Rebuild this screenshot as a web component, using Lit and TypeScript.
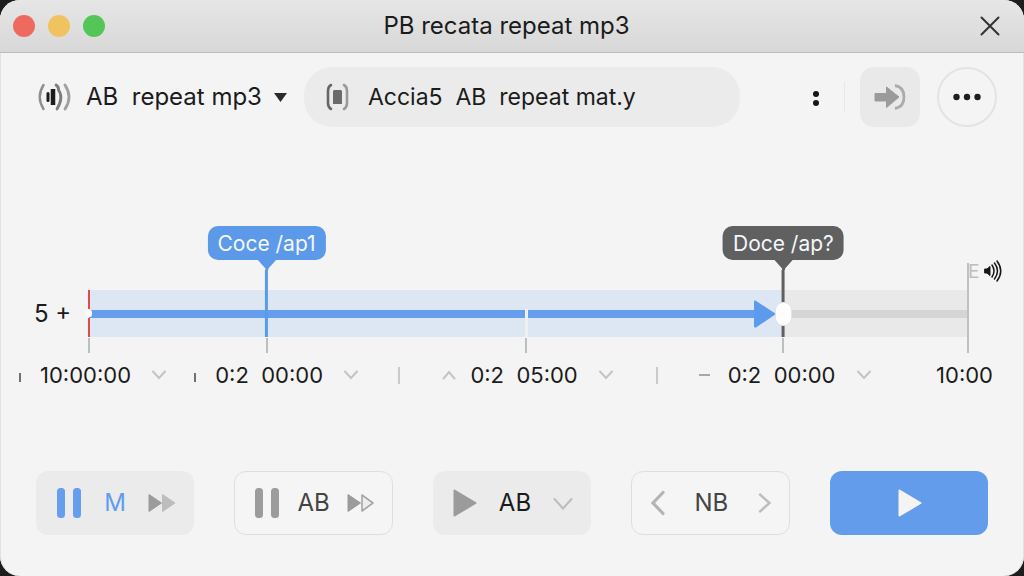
import { LitElement, html, css, svg, nothing } from "lit";
import { customElement, property, state } from "lit/decorators.js";
import { classMap } from "lit/directives/class-map.js";
import { styleMap } from "lit/directives/style-map.js";

const chevronDown = html`<svg width="16" height="10" viewBox="0 0 16 10" fill="none" stroke="currentColor" stroke-width="2" stroke-linecap="round" aria-hidden="true"><path d="M2 1.500 8 8l6-6.500" /></svg>`;
const chevronUp = html`<svg width="16" height="10" viewBox="0 0 16 10" fill="none" stroke="currentColor" stroke-width="2" stroke-linecap="round" aria-hidden="true"><path d="M2.500 8.500 8 2l5.500 6.500" /></svg>`;

interface Marker {
  at: number;
  label: string;
  tone: "blue" | "dark";
}

interface TimeCell {
  lead: "stub" | "up" | "dash" | "none";
  divided: boolean;
  time: string;
  menu: boolean;
}

@customElement("ab-timeline")
export class AbTimeline extends LitElement {
  static styles = css`
    :host { display: block; }
    .lane { display: flex; align-items: center; padding: 0 56px 0 34px; }
    .speed { flex: none; width: 55px; font-size: 24px; line-height: 28px; white-space: pre; }
    .track { position: relative; flex: 1; height: 47px; display: flex; background: #e9e9e9; }
    .played { display: flex; align-items: center; background: #dde7f4; }
    .rest { flex: 1; display: flex; align-items: center; }
    .line { flex: 1; height: 8px; background: #649eec; }
    .line.grey { background: #d5d5d5; }
    .head { flex: none; width: 22px; height: 28px; margin-right: 7px; color: #5c9aec; }
    .start { position: absolute; left: -1px; top: 0; width: 2px; height: 19px; background: #e2494b; }
    .start.low { top: 28px; }
    .nub { position: absolute; left: -3px; top: 20px; width: 6px; height: 7px; border-radius: 2px; background: #fafafa; }
    .tick { position: absolute; top: 48px; width: 2px; height: 15px; margin-left: -1px; background: #bcbfc2; }
    .gap { position: absolute; top: 19px; width: 3px; height: 28px; margin-left: -1px; background: #f0f0f0; }
    .end { position: absolute; right: -1px; top: -27px; width: 2px; height: 90px; background: #c0c0c0; }
    .pin { position: absolute; bottom: 0; display: flex; flex-direction: column; align-items: center; transform: translateX(-50%); }
    .bubble { display: block; box-sizing: border-box; border-radius: 10px; padding: 4px 10px 2px; height: 34px; line-height: 28px; font-size: 21px; white-space: nowrap; color: #f4f7fc; background: var(--tone); }
    .notch { display: block; width: 20px; height: 11px; margin-top: -1px; color: var(--tone); }
    .stem { width: 3px; height: 67px; background: var(--tone); }
    .blue { --tone: #5c9ae9; }
    .dark { --tone: #606060; }
    .seek { position: absolute; inset: 0; width: 100%; height: 100%; margin: 0; appearance: none; background: none; }
    .seek::-webkit-slider-thumb { appearance: none; width: 17px; height: 24px; border-radius: 8px; background: #fdfdfd; border: 1px solid #e3e3e3; }
    .tail { position: absolute; left: 100%; top: -32px; display: flex; align-items: center; gap: 5px; height: 26px; font-size: 19px; color: #bdbdbd; }
    .tail svg { color: #161616; }
    .times { display: grid; grid-template-columns: 175fr 205fr 257fr 257fr 80fr; padding: 0 31px 0 18px; margin-top: 24px; align-items: center; }
    .cell { display: flex; align-items: center; height: 28px; white-space: pre; }
    .cell.last { justify-content: flex-end; }
    .time { font: inherit; font-size: 22px; line-height: 28px; color: inherit; background: none; border: 0; padding: 0; display: flex; align-items: center; gap: 20px; white-space: pre; }
    .time svg, .arrow { color: #c4c4c4; }
    .arrow { border: 0; background: none; padding: 0; margin-right: 13px; display: flex; }
    .stub { width: 2px; height: 9px; background: #707070; margin: 4px 19px 0 1px; }
    .rule { width: 2px; height: 17px; background: #cacaca; margin-right: 41px; }
    .dash { width: 11px; height: 2px; background: #a8a8a8; margin-right: 18px; }
  `;

  @property({ attribute: false }) markers: Marker[] = [];
  @property({ attribute: false }) ticks: number[] = [];
  @property({ attribute: false }) cells: TimeCell[] = [];
  @property({ type: Number }) position = 79;

  private renderPin(m: Marker) {
    return html`<div class=${classMap({ pin: true, [m.tone]: true })} style=${styleMap({ left: `${m.at}%` })}>
      <span class="bubble">${m.label}</span>
      <svg class="notch" viewBox="0 0 20 11" aria-hidden="true"><path fill="currentColor" d="M0 0h20l-8.500 9.500V11h-3V9.500z" /></svg>
      <span class="stem"></span>
    </div>`;
  }

  private renderCell(c: TimeCell) {
    return html`<div class=${classMap({ cell: true, last: !c.menu })}>
      ${c.divided ? html`<span class="rule"></span>` : nothing}
      ${c.lead === "stub" ? html`<span class="stub"></span>` : nothing}
      ${c.lead === "dash" ? html`<span class="dash"></span>` : nothing}
      ${c.lead === "up" ? html`<button class="arrow" aria-label="Later">${chevronUp}</button>` : nothing}
      ${c.menu ? html`<button class="time">${c.time}${chevronDown}</button>` : html`<time class="time">${c.time}</time>`}
    </div>`;
  }

  render() {
    return html`
      <div class="lane">
        <span class="speed">5 +</span>
        <div class="track">
          <div class="played" style=${styleMap({ width: `${this.position}%` })}>
            <span class="line"></span>
            <svg class="head" viewBox="0 0 22 28" aria-hidden="true"><path fill="currentColor" d="M0 1.500Q0 0 1.500.6L22 14 2 27.400Q0 28 0 26.500z" /></svg>
          </div>
          <div class="rest"><span class="line grey"></span></div>
          <span class="start"></span><span class="start low"></span><span class="nub"></span>
          ${this.ticks.map((t) => html`<span class="tick" style=${styleMap({ left: `${t}%` })}></span>`)}
          <span class="gap" style=${styleMap({ left: `${this.ticks[2]}%` })}></span>
          <span class="end"></span>
          ${this.markers.map((m) => this.renderPin(m))}
          <input class="seek" type="range" min="0" max="100" step="any" .value=${"79.6"} aria-label="Playback position" />
          <div class="tail">
            <span>E</span>
            <svg width="18" height="24" viewBox="0 0 18 24" fill="none" stroke="currentColor" stroke-width="1.800" stroke-linecap="round" aria-hidden="true">
              <path d="M1 10h2l3-2.500v9L3 14H1z" fill="currentColor" stroke-width="1" />
              <path d="M8 6q4 6 0 12M10.500 4q6 8 0 16M13 2q7.500 10 0 20" stroke-width="1.500" />
            </svg>
          </div>
        </div>
      </div>
      <div class="times">${this.cells.map((c) => this.renderCell(c))}</div>
    `;
  }
}

@customElement("app-root")
export class AppRoot extends LitElement {
  static styles = css`
    :host { display: block; background: #1c1e1e; font-family: Inter, "Liberation Sans", sans-serif; color: #1b1b1b; }
    .window { box-sizing: border-box; min-height: 100vh; display: flex; flex-direction: column; background: #f4f4f4; border-radius: 20px; overflow: hidden; box-shadow: inset 1px 0 #e2e2e2, inset -1px 0 #e2e2e2; }
    button { font: inherit; color: inherit; border: 0; background: none; padding: 0; }
    .titlebar { display: grid; grid-template-columns: 1fr auto 1fr; align-items: center; height: 52px; padding: 0 24px 0 13px; background: linear-gradient(#e6e6e6, #d8d8d8); border-bottom: 1px solid #bdbdbd; }
    .lights { display: flex; gap: 13px; }
    .light { width: 22px; height: 22px; border-radius: 50%; }
    .red { background: #ee6a5f; }
    .yellow { background: #f0c360; }
    .green { background: #54c658; }
    .title { margin: 0; font-size: 24px; font-weight: 400; line-height: 28px; }
    .close { justify-self: end; display: flex; }
    .toolbar { display: flex; align-items: center; padding: 14px 27px 0 37px; font-size: 24px; line-height: 28px; }
    .source { flex: none; display: flex; align-items: center; white-space: pre; }
    .source-name { margin: 0 12px 0 14px; }
    .field { flex: 1; min-width: 0; box-sizing: border-box; display: flex; align-items: center; gap: 19px; height: 60px; margin-left: 17px; padding: 0 22px; border-radius: 28px; background: #ebebeb; font-size: 23px; }
    .field svg { flex: none; }
    .query { flex: 1; min-width: 0; font: inherit; color: inherit; border: 0; padding: 0; background: none; outline: none; }
    .more { flex: none; width: 10px; margin: 0 23px 0 71px; display: flex; }
    .divider { flex: none; width: 1px; height: 30px; background: #e8e8e8; }
    .share { flex: none; display: flex; align-items: center; justify-content: center; width: 60px; height: 60px; margin: 0 17px 0 15px; border-radius: 14px; background: #e9e9e9; }
    .menu { flex: none; box-sizing: border-box; display: flex; align-items: center; justify-content: center; width: 60px; height: 60px; border: 2px solid #e3e3e3; border-radius: 50%; }
    .timeline { margin-top: 163px; }
    .controls { display: grid; grid-template-columns: repeat(5, minmax(0, 1fr)); gap: 40px; margin-top: auto; padding: 0 36px 41px; }
    .control { box-sizing: border-box; height: 64px; display: flex; align-items: center; justify-content: space-between; padding: 0 18px 0 20px; border-radius: 12px; background: #ebebeb; font-size: 24px; line-height: 28px; }
    .control.outline { background: #f5f5f5; border: 1px solid #dedede; color: #444; padding: 0 17px 0 19px; }
    .control.primary { justify-content: center; background: #629ceb; }
    .accent { color: #5f9eee; }
  `;

  @state() private query = "Accia5  AB  repeat mat.y";

  private markers: Marker[] = [
    { at: 20.2, label: "Coce /ap1", tone: "blue" },
    { at: 79, label: "Doce /ap?", tone: "dark" },
  ];

  private ticks = [0, 20.2, 49.7, 79];

  private cells: TimeCell[] = [
    { lead: "stub", divided: false, time: "10:00:00", menu: true },
    { lead: "stub", divided: false, time: "0:2  00:00", menu: true },
    { lead: "up", divided: true, time: "0:2  05:00", menu: true },
    { lead: "dash", divided: true, time: "0:2  00:00", menu: true },
    { lead: "none", divided: false, time: "10:00", menu: false },
  ];

  private pauseIcon(color: string) {
    return html`<svg width="26" height="30" viewBox="0 0 26 30" fill=${color} aria-hidden="true"><rect x="1" width="8" height="30" rx="3.500" /><rect x="17" width="8" height="30" rx="3.500" /></svg>`;
  }

  private forwardIcon(hollow: boolean) {
    return html`<svg width="28" height="20" viewBox="0 0 28 20" aria-hidden="true">
      <path d="M1 1.500 13.500 10 1 18.500z" fill="#9b9b9b" stroke="#9b9b9b" stroke-linejoin="round" />
      ${hollow
        ? svg`<path d="M15 2 26 10 15 18z" fill="#ededed" stroke="#a6a6a6" stroke-width="1.600" stroke-linejoin="round" />`
        : svg`<path d="M14.500 1.500 27 10 14.500 18.500z" fill="#bdbdbd" stroke="#bdbdbd" stroke-linejoin="round" />`}
    </svg>`;
  }

  private playIcon(color: string) {
    return html`<svg width="24" height="28" viewBox="0 0 24 28" aria-hidden="true"><path d="M1.500 1.500 22.500 14l-21 12.500z" fill=${color} stroke=${color} stroke-width="2" stroke-linejoin="round" /></svg>`;
  }

  render() {
    return html`
      <main class="window">
        <header class="titlebar">
          <div class="lights">
            <button class="light red" aria-label="Close window"></button>
            <button class="light yellow" aria-label="Minimise"></button>
            <button class="light green" aria-label="Zoom"></button>
          </div>
          <h1 class="title">PB recata repeat mp3</h1>
          <button class="close" aria-label="Close">
            <svg width="20" height="20" viewBox="0 0 20 20" stroke="#333" stroke-width="2" stroke-linecap="round"><path d="M1.500 1.500l17 17M18.500 1.500l-17 17" /></svg>
          </button>
        </header>

        <div class="toolbar">
          <button class="source">
            <svg width="35" height="30" viewBox="0 0 35 30" fill="none" stroke-linecap="round" aria-hidden="true">
              <path d="M6.500 3Q-1 15 6.500 27" stroke="#8e8e8e" stroke-width="2.400" />
              <path d="M11 11.500v7" stroke="#1c1c1c" stroke-width="3" />
              <path d="M16 7v16" stroke="#1c1c1c" stroke-width="4.500" stroke-linecap="butt" />
              <path d="M19 3Q22 5 21.500 8Q27 15 20 27" stroke="#7d7d7d" stroke-width="2.800" />
              <path d="M28 3Q36 15 28 27" stroke="#a0a0a0" stroke-width="2.800" />
            </svg>
            <span class="source-name">AB  repeat mp3</span>
            <svg width="13" height="9" viewBox="0 0 13 9" fill="#2a2a2a" aria-hidden="true"><path d="M0 0h13L6.500 9z" /></svg>
          </button>
          <label class="field">
            <svg width="23" height="28" viewBox="0 0 23 28" fill="none" stroke-width="2.600" stroke-linecap="round" aria-hidden="true">
              <path d="M5 2Q2 3.500 2 8v12q0 4.500 3 6" stroke="#666" />
              <path d="M18 2q3 1.500 3 6v12q0 4.500-3 6" stroke="#999" />
              <path d="M7 8l1-1h7l1 1v13H7z" fill="#6e6a6a" />
            </svg>
            <input class="query" type="text" aria-label="Search" .value=${this.query} />
          </label>
          <button class="more" aria-label="Options">
            <svg width="10" height="20" viewBox="0 0 10 20" fill="#161616"><circle cx="5" cy="7" r="3" /><circle cx="5" cy="16" r="3" /></svg>
          </button>
          <span class="divider"></span>
          <button class="share" aria-label="Send to">
            <svg width="32" height="28" viewBox="0 0 32 28" aria-hidden="true">
              <path d="M1 10.500h11.500V4L25 14 12.500 24.500V18H1z" fill="#9b9b9b" stroke="#9b9b9b" stroke-linejoin="round" />
              <path d="M21 2.500q9 1.500 9 11.500t-9 11.500" fill="none" stroke="#ababab" stroke-width="2.800" />
            </svg>
          </button>
          <button class="menu" aria-label="More">
            <svg width="28" height="8" viewBox="0 0 28 8" fill="#1d1f22"><circle cx="3.500" cy="4" r="3.200" /><circle cx="14" cy="4" r="3.200" /><circle cx="24.500" cy="4" r="3.200" /></svg>
          </button>
        </div>

        <ab-timeline class="timeline" .markers=${this.markers} .ticks=${this.ticks} .cells=${this.cells} .position=${79}></ab-timeline>

        <footer class="controls">
          <button class="control">${this.pauseIcon("#649eec")}<span class="accent">M</span>${this.forwardIcon(false)}</button>
          <button class="control outline">${this.pauseIcon("#9c9c9c")}<span>AB</span>${this.forwardIcon(true)}</button>
          <button class="control">
            ${this.playIcon("#9b9b9b")}<span>AB</span>
            <svg width="20" height="14" viewBox="0 0 20 14" fill="none" stroke="#bfbfbf" stroke-width="2.200" stroke-linecap="round" aria-hidden="true"><path d="M1.500 3l8.500 9.500L18.500 3" /></svg>
          </button>
          <button class="control outline">
            <svg width="14" height="26" viewBox="0 0 14 26" fill="none" stroke="#b4b4b4" stroke-width="3.200" stroke-linecap="round" aria-hidden="true"><path d="M12 2.500 2 13l10 10.500" /></svg>
            <span>NB</span>
            <svg width="14" height="20" viewBox="0 0 14 20" fill="none" stroke="#bdbdbd" stroke-width="2.400" stroke-linecap="round" aria-hidden="true"><path d="M2 1.500 11.500 10 2 18.500" /></svg>
          </button>
          <button class="control primary" aria-label="Play">${this.playIcon("#f4f4f4")}</button>
        </footer>
      </main>
    `;
  }
}
